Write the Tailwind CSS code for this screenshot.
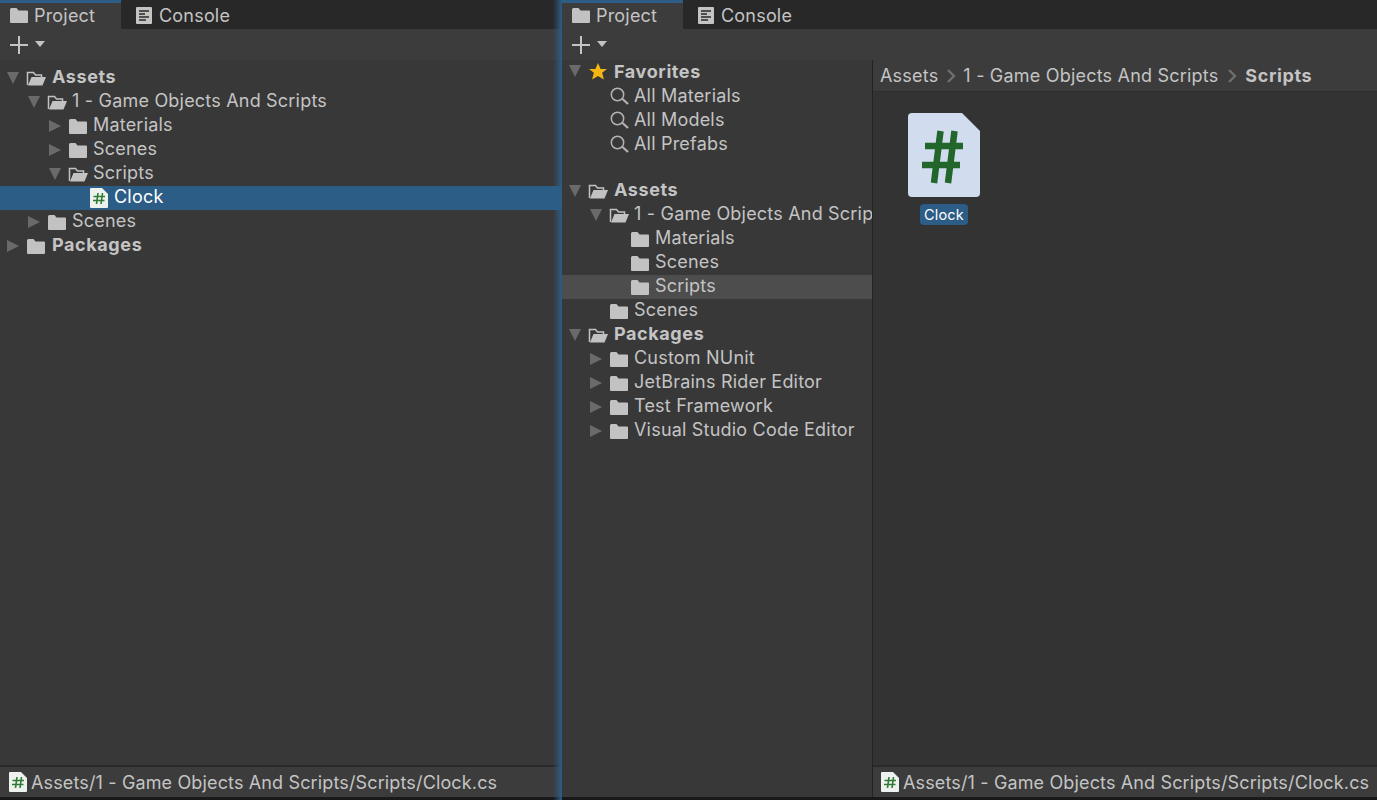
<!DOCTYPE html>
<html lang="en">

<head>
    <meta charset="utf-8">
    <title>Unity Project Windows</title>
    <script src="https://cdn.jsdelivr.net/npm/@tailwindcss/browser@4"></script>
</head>

<body class="w-[1377px] h-[800px] overflow-hidden bg-[#191919] font-[Inter,sans-serif] text-[18px] tracking-[0.2px] text-[#c4c4c4]">
    <!-- shared icons -->
    <svg class="hidden">
        <symbol id="closed" viewBox="0 0 20 18"><path d="M1 3.500Q1 2 2.500 2H7.500L9.500 4.500H18Q19 4.500 19 5.500V16Q19 17 18 17H2Q1 17 1 16Z" fill="#c2c2c2"/></symbol>
        <symbol id="open" viewBox="0 0 20 18"><path d="M1.500 16V3.500H7.500L9.500 6H15.500V8" fill="none" stroke="#c2c2c2" stroke-width="1.500"/><path d="M2 16.500L5.500 8H20L16.500 16.500Z" fill="#c2c2c2"/></symbol>
        <symbol id="right" viewBox="0 0 14 16"><path d="M1 2L13 8L1 14Z" fill="#6a6a6a"/></symbol>
        <symbol id="down" viewBox="0 0 14 14"><path d="M1 1H13L7 13Z" fill="#6a6a6a"/></symbol>
        <symbol id="search" viewBox="0 0 20 20"><circle cx="7.500" cy="9.500" r="6.200" fill="none" stroke="#b4b4b4" stroke-width="1.500"/><path d="M12.500 14L18 19" stroke="#b4b4b4" stroke-width="2.200"/></symbol>
        <symbol id="script" viewBox="0 0 18 20"><path d="M1 0H12L18 6V19Q18 20 17 20H1Q0 20 0 19V1Q0 0 1 0Z" fill="#eef2ee"/><path d="M8 5L6.500 16M12.500 5L11 16M3.500 8.500H15M3 12.500H14.500" stroke="#2f7a35" stroke-width="1.600" fill="none"/></symbol>
        <symbol id="plus" viewBox="0 0 18 18"><path d="M9 0V18M0 9H18" stroke="#c4c4c4" stroke-width="2"/></symbol>
        <symbol id="caret" viewBox="0 0 12 7"><path d="M1 0H11L6 6Z" fill="#c4c4c4"/></symbol>
        <symbol id="log" viewBox="0 0 16 17"><path d="M0 1Q0 0 1 0H15Q16 0 16 1V16Q16 17 15 17H1Q0 17 0 16Z" fill="#c4c4c4"/><path d="M3 4H13M3 7H9M3 10H13M3 13H10" stroke="#282828" stroke-width="1.500"/></symbol>
    </svg>

    <div class="flex h-[797px]">
        <!-- left project window (tree only) -->
        <div class="w-[562px] flex flex-col bg-[#383838] relative">
            <div class="h-[29px] flex bg-[#282828] shrink-0">
                <div class="w-[121px] bg-[#3c3c3c] border-t-[3px] border-[#2c5d87] flex items-center pl-[9px] pb-[2px] gap-[5px]">
                    <svg class="w-[20px] h-[18px]"><use href="#closed"/></svg><span>Project</span>
                </div>
                <div class="flex items-center pl-[15px] gap-[7px] pt-[1px]">
                    <svg class="w-[16px] h-[17px]"><use href="#log"/></svg><span>Console</span>
                </div>
            </div>
            <div class="h-[31px] bg-[#3c3c3c] flex items-center pl-[10px] gap-[6px] shrink-0">
                <svg class="w-[18px] h-[18px]"><use href="#plus"/></svg><svg class="w-[12px] h-[7px] -mt-[1px]"><use href="#caret"/></svg>
            </div>
            <div class="flex-1 pt-[6px] whitespace-nowrap [&_span]:pb-[4px] [&_svg]:shrink-0">
                <div class="h-[24px] flex items-center pl-[6px]"><svg class="w-[14px] h-[14px]"><use href="#down"/></svg><svg class="ml-[6px] w-[20px] h-[18px]"><use href="#open"/></svg><span class="ml-[6px] font-bold tracking-[0.6px]">Assets</span></div>
                <div class="h-[24px] flex items-center pl-[27px]"><svg class="w-[14px] h-[14px]"><use href="#down"/></svg><svg class="ml-[6px] w-[20px] h-[18px]"><use href="#open"/></svg><span class="ml-[5px]">1 - Game Objects And Scripts</span></div>
                <div class="h-[24px] flex items-center pl-[48px]"><svg class="w-[14px] h-[16px]"><use href="#right"/></svg><svg class="ml-[6px] w-[20px] h-[18px]"><use href="#closed"/></svg><span class="ml-[5px]">Materials</span></div>
                <div class="h-[24px] flex items-center pl-[48px]"><svg class="w-[14px] h-[16px]"><use href="#right"/></svg><svg class="ml-[6px] w-[20px] h-[18px]"><use href="#closed"/></svg><span class="ml-[5px]">Scenes</span></div>
                <div class="h-[24px] flex items-center pl-[48px]"><svg class="w-[14px] h-[14px]"><use href="#down"/></svg><svg class="ml-[6px] w-[20px] h-[18px]"><use href="#open"/></svg><span class="ml-[5px]">Scripts</span></div>
                <div class="h-[24px] flex items-center pl-[90px] bg-[#2c5d87] text-white"><svg class="w-[18px] h-[20px]"><use href="#script"/></svg><span class="ml-[6px]">Clock</span></div>
                <div class="h-[24px] flex items-center pl-[27px]"><svg class="w-[14px] h-[16px]"><use href="#right"/></svg><svg class="ml-[6px] w-[20px] h-[18px]"><use href="#closed"/></svg><span class="ml-[5px]">Scenes</span></div>
                <div class="h-[24px] flex items-center pl-[6px]"><svg class="w-[14px] h-[16px]"><use href="#right"/></svg><svg class="ml-[6px] w-[20px] h-[18px]"><use href="#closed"/></svg><span class="ml-[6px] font-bold tracking-[0.6px]">Packages</span></div>
            </div>
            <div class="h-[32px] border-t-2 border-[#2a2a2a] bg-[#3c3c3c] flex items-center pl-[9px] gap-[4px] whitespace-nowrap shrink-0">
                <svg class="w-[18px] h-[20px]"><use href="#script"/></svg><span class="tracking-[0.14px]">Assets/1 - Game Objects And Scripts/Scripts/Clock.cs</span>
            </div>
            <!-- glow of the docked window edge -->
            <div class="absolute top-0 bottom-[-3px] right-0 w-[9px] bg-gradient-to-r from-[#2c5d87]/0 to-[#2c5d87] pointer-events-none"></div>
        </div>

        <!-- right project window (two columns) -->
        <div class="w-[815px] flex flex-col bg-[#383838]">
            <div class="h-[29px] flex bg-[#282828] shrink-0">
                <div class="w-[121px] bg-[#3c3c3c] border-t-[3px] border-[#2c5d87] flex items-center pl-[9px] pb-[2px] gap-[5px]">
                    <svg class="w-[20px] h-[18px]"><use href="#closed"/></svg><span>Project</span>
                </div>
                <div class="flex items-center pl-[15px] gap-[7px] pt-[1px]">
                    <svg class="w-[16px] h-[17px]"><use href="#log"/></svg><span>Console</span>
                </div>
            </div>
            <div class="h-[31px] bg-[#3c3c3c] flex items-center pl-[10px] gap-[6px] shrink-0">
                <svg class="w-[18px] h-[18px]"><use href="#plus"/></svg><svg class="w-[12px] h-[7px] -mt-[1px]"><use href="#caret"/></svg>
            </div>
            <div class="flex-1 flex min-h-0">
                <!-- folder tree -->
                <div class="w-[311px] border-r border-[#232323] overflow-hidden whitespace-nowrap [&_svg]:shrink-0">
                    <div class="h-[120px] -mt-[1px]">
                        <div class="h-[24px] flex items-center pl-[6px]"><svg class="w-[14px] h-[14px]"><use href="#down"/></svg><svg class="ml-[7px] w-[18px] h-[17px]" viewBox="0 0 20 19"><path d="M10 0L12.900 6.600H20L14.600 11L16.600 18.500L10 14.500L3.400 18.500L5.400 11L0 6.600H7.100Z" fill="#f5b70f"/></svg><span class="ml-[7px] font-bold tracking-[0.6px]">Favorites</span></div>
                        <div class="h-[24px] flex items-center pl-[48px]"><svg class="w-[20px] h-[20px]"><use href="#search"/></svg><span class="ml-[4px]">All Materials</span></div>
                        <div class="h-[24px] flex items-center pl-[48px]"><svg class="w-[20px] h-[20px]"><use href="#search"/></svg><span class="ml-[4px]">All Models</span></div>
                        <div class="h-[24px] flex items-center pl-[48px]"><svg class="w-[20px] h-[20px]"><use href="#search"/></svg><span class="ml-[4px]">All Prefabs</span></div>
                    </div>
                    <div class="[&_span]:pb-[4px]">
                        <div class="h-[24px] flex items-center pl-[6px]"><svg class="w-[14px] h-[14px]"><use href="#down"/></svg><svg class="ml-[6px] w-[20px] h-[18px]"><use href="#open"/></svg><span class="ml-[6px] font-bold tracking-[0.6px]">Assets</span></div>
                        <div class="h-[24px] flex items-center pl-[27px]"><svg class="w-[14px] h-[14px]"><use href="#down"/></svg><svg class="ml-[6px] w-[20px] h-[18px]"><use href="#open"/></svg><span class="ml-[5px]">1 - Game Objects And Scripts</span></div>
                        <div class="h-[24px] flex items-center pl-[68px]"><svg class="w-[20px] h-[18px]"><use href="#closed"/></svg><span class="ml-[5px]">Materials</span></div>
                        <div class="h-[24px] flex items-center pl-[68px]"><svg class="w-[20px] h-[18px]"><use href="#closed"/></svg><span class="ml-[5px]">Scenes</span></div>
                        <div class="h-[24px] flex items-center pl-[68px] bg-[#4d4d4d]"><svg class="w-[20px] h-[18px]"><use href="#closed"/></svg><span class="ml-[5px]">Scripts</span></div>
                        <div class="h-[24px] flex items-center pl-[47px]"><svg class="w-[20px] h-[18px]"><use href="#closed"/></svg><span class="ml-[5px]">Scenes</span></div>
                        <div class="h-[24px] flex items-center pl-[6px]"><svg class="w-[14px] h-[14px]"><use href="#down"/></svg><svg class="ml-[6px] w-[20px] h-[18px]"><use href="#open"/></svg><span class="ml-[6px] font-bold tracking-[0.6px]">Packages</span></div>
                        <div class="h-[24px] flex items-center pl-[27px]"><svg class="w-[14px] h-[16px]"><use href="#right"/></svg><svg class="ml-[6px] w-[20px] h-[18px]"><use href="#closed"/></svg><span class="ml-[5px]">Custom NUnit</span></div>
                        <div class="h-[24px] flex items-center pl-[27px]"><svg class="w-[14px] h-[16px]"><use href="#right"/></svg><svg class="ml-[6px] w-[20px] h-[18px]"><use href="#closed"/></svg><span class="ml-[5px]">JetBrains Rider Editor</span></div>
                        <div class="h-[24px] flex items-center pl-[27px]"><svg class="w-[14px] h-[16px]"><use href="#right"/></svg><svg class="ml-[6px] w-[20px] h-[18px]"><use href="#closed"/></svg><span class="ml-[5px]">Test Framework</span></div>
                        <div class="h-[24px] flex items-center pl-[27px]"><svg class="w-[14px] h-[16px]"><use href="#right"/></svg><svg class="ml-[6px] w-[20px] h-[18px]"><use href="#closed"/></svg><span class="ml-[5px]">Visual Studio Code Editor</span></div>
                    </div>
                </div>
                <!-- asset grid -->
                <div class="flex-1 flex flex-col bg-[#333333]">
                    <div class="h-[32px] bg-[#3c3c3c] border-b border-[#2e2e2e] flex items-center pl-[7px] whitespace-nowrap shrink-0">
                        <span>Assets</span>
                        <svg class="w-[10px] h-[14px] ml-[8px] mr-[7px]" viewBox="0 0 10 14"><path d="M2 1L8 7L2 13" fill="none" stroke="#6f6f6f" stroke-width="2.400"/></svg>
                        <span>1 - Game Objects And Scripts</span>
                        <svg class="w-[10px] h-[14px] ml-[9px] mr-[8px]" viewBox="0 0 10 14"><path d="M2 1L8 7L2 13" fill="none" stroke="#6f6f6f" stroke-width="2.400"/></svg>
                        <span class="font-bold tracking-[0.6px]">Scripts</span>
                    </div>
                    <div class="w-[142px] pt-[21px] flex flex-col items-center">
                        <svg class="w-[72px] h-[84px]" viewBox="0 0 72 84"><path d="M4 0H54L72 18V80Q72 84 68 84H4Q0 84 0 80V4Q0 0 4 0Z" fill="#d2dcef"/><path d="M32.500 18L26 70M46.500 18L40 70M17 33H55M14 52H52" stroke="#23662b" stroke-width="6.500" fill="none"/></svg>
                        <span class="mt-[7px] h-[21px] px-[4px] rounded-[4px] bg-[#2c5d87] text-white text-[14.5px] leading-[21px]">Clock</span>
                    </div>
                    <div class="flex-1"></div>
                    <div class="h-[32px] border-t-2 border-[#2a2a2a] bg-[#3c3c3c] flex items-center pl-[8px] gap-[4px] whitespace-nowrap shrink-0">
                        <svg class="w-[18px] h-[20px]"><use href="#script"/></svg><span class="tracking-[0.14px]">Assets/1 - Game Objects And Scripts/Scripts/Clock.cs</span>
                    </div>
                </div>
            </div>
        </div>
    </div>
</body>

</html>
